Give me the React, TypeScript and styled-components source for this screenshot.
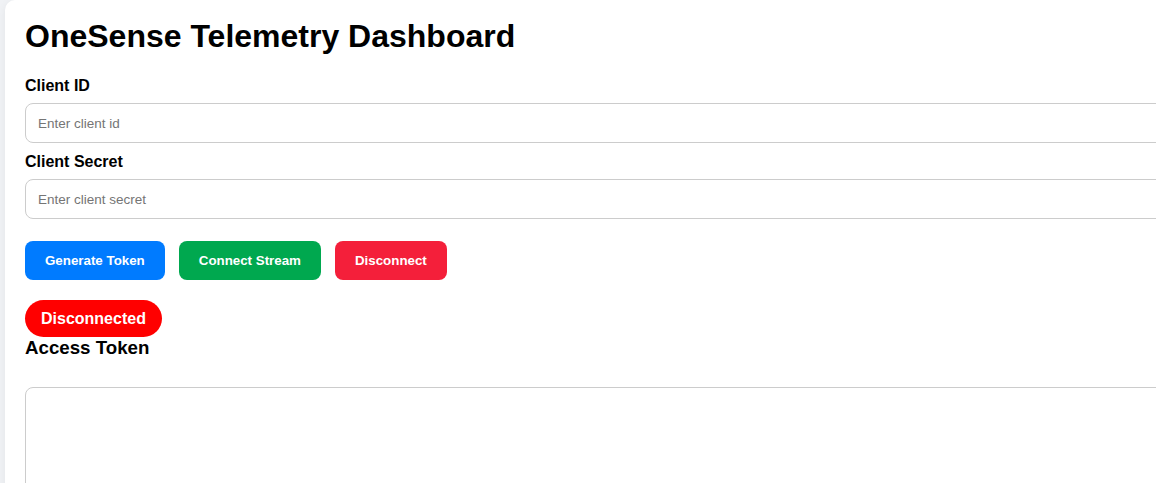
import React from "react";
import styled, { createGlobalStyle } from "styled-components";

const GlobalStyle = createGlobalStyle`
  body {
    margin: 0;
    background: #f0f2f5;
    font-family: "Liberation Sans", Arial, sans-serif;
    overflow: hidden;
  }
`;

const Page = styled.div`
  padding-left: 5px;
  min-height: 100vh;
`;

const Card = styled.div`
  width: 1400px;
  min-height: 100vh;
  box-sizing: border-box;
  background: #fff;
  border-radius: 10px;
  padding: 18px 20px 20px;
  box-shadow: 0 2px 8px rgba(0, 0, 0, 0.06);
`;

const Title = styled.h1`
  margin: 0 0 22px;
  font-size: 32px;
  font-weight: bold;
  color: #000;
`;

const Label = styled.label`
  display: block;
  font-size: 16px;
  font-weight: bold;
  margin-bottom: 8px;
`;

const Input = styled.input`
  display: block;
  width: 100%;
  height: 40px;
  box-sizing: border-box;
  padding: 0 12px;
  margin-bottom: 10px;
  border: 1px solid #ccc;
  border-radius: 8px;
  font-family: "Liberation Sans", Arial, sans-serif;
  font-size: 13.5px;

  &::placeholder {
    color: #757575;
  }
`;

const Actions = styled.div`
  display: flex;
  gap: 14px;
  margin-top: 22px;
`;

const Button = styled.button<{ $color: string }>`
  height: 39px;
  padding: 0 20px;
  border: none;
  border-radius: 8px;
  background: ${(p) => p.$color};
  color: #fff;
  font-family: "Liberation Sans", Arial, sans-serif;
  font-size: 13.33px;
  font-weight: bold;
  cursor: pointer;
`;

const Status = styled.div`
  display: inline-block;
  margin-top: 20px;
  padding: 9.5px 16px;
  border-radius: 20px;
  background: #ff0000;
  color: #fff;
  font-size: 16px;
  font-weight: bold;
`;

const SectionTitle = styled.h3`
  margin: 0 0 28px;
  font-size: 18.72px;
  font-weight: bold;
`;

const TokenArea = styled.textarea`
  display: block;
  width: 100%;
  height: 200px;
  box-sizing: border-box;
  border: 1px solid #ccc;
  border-radius: 8px;
  resize: none;
`;

const App = () => {
  return (
    <>
      <GlobalStyle />
      <Page>
        <Card>
          <Title>OneSense Telemetry Dashboard</Title>
          <Label>Client ID</Label>
          <Input placeholder="Enter client id" />
          <Label>Client Secret</Label>
          <Input placeholder="Enter client secret" />
          <Actions>
            <Button $color="#007bff">Generate Token</Button>
            <Button $color="#00a84f">Connect Stream</Button>
            <Button $color="#f41f3a">Disconnect</Button>
          </Actions>
          <Status>Disconnected</Status>
          <SectionTitle>Access Token</SectionTitle>
          <TokenArea readOnly />
        </Card>
      </Page>
    </>
  );
};

export default App;
